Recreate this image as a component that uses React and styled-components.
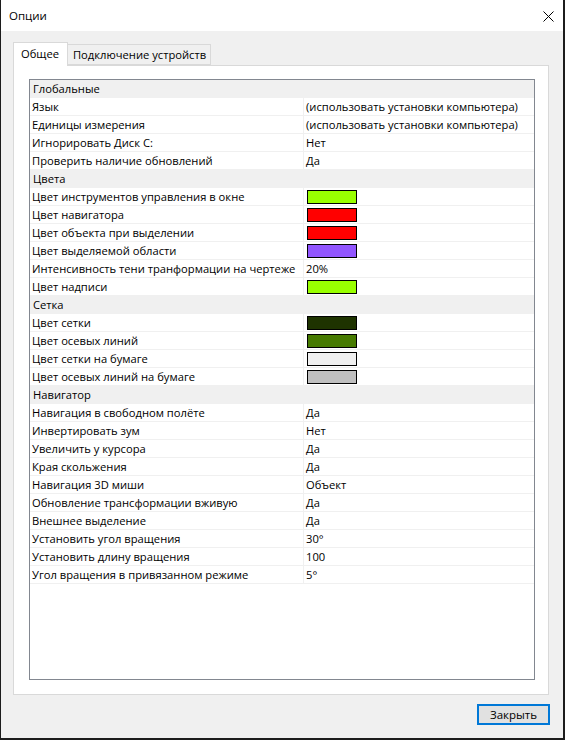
import React from "react";
import styled, { createGlobalStyle } from "styled-components";

const GlobalStyle = createGlobalStyle`
  html, body {
    margin: 0;
    padding: 0;
    background: #1c1c1c;
  }
  body {
    font-family: "Open Sans", "Noto Sans", sans-serif;
    font-size: 11.2px;
    color: #000;
  }
`;

const Window = styled.div`
  width: 562px;
  height: 738px;
  margin-left: 1px;
  display: flex;
  flex-direction: column;
  background: #f0f0f0;
`;

const TitleBar = styled.div`
  height: 31px;
  background: #fff;
  display: flex;
  align-items: center;
  justify-content: space-between;
  padding-left: 8px;
  box-sizing: border-box;
`;

const Title = styled.span`
  font-size: 11.5px;
  line-height: 16px;
  padding-top: 1px;
`;

const CloseButton = styled.div`
  width: 30px;
  height: 31px;
  display: flex;
  align-items: center;
  justify-content: center;
  padding-top: 1px;
  box-sizing: border-box;
`;

const Body = styled.div`
  flex: 1;
  display: flex;
  flex-direction: column;
  padding: 12px 14px 13px 12px;
  min-height: 0;
`;

const TabStrip = styled.div`
  display: flex;
  align-items: flex-end;
  height: 23px;
  position: relative;
  z-index: 1;
  margin-bottom: -1px;
`;

const Tab = styled.div`
  box-sizing: border-box;
  height: ${(p) => (p.$active ? "24px" : "21px")};
  padding: ${(p) => (p.$active ? "3px 8px 0 7px" : "2px 4px 0 5px")};
  background: ${(p) => (p.$active ? "#fff" : "#f0f0f0")};
  border: 1px solid #d9d9d9;
  border-bottom: ${(p) => (p.$active ? "none" : "1px solid #d9d9d9")};
  border-left: ${(p) => (p.$first ? "1px solid #d9d9d9" : "none")};
  margin-bottom: ${(p) => (p.$active ? "0" : "1px")};
  line-height: 16px;
  white-space: nowrap;
`;

const Panel = styled.div`
  flex: 1;
  display: flex;
  flex-direction: column;
  background: #fff;
  border: 1px solid #d9d9d9;
  padding: 13px 13px 14px 15px;
  min-height: 0;
`;

const Grid = styled.div`
  flex: 1;
  border: 1px solid #828790;
  background: #fff;
  overflow: hidden;
`;

const CategoryRow = styled.div`
  height: 17px;
  border-bottom: 1px solid #f0f0f0;
  background: #f0f0f0;
  padding-left: 3px;
  line-height: 17px;
  white-space: nowrap;
`;

const Row = styled.div`
  display: grid;
  grid-template-columns: 274px 1fr;
  height: 17px;
  border-bottom: 1px solid #f0f0f0;
`;

const NameCell = styled.div`
  padding-left: 2px;
  line-height: 17px;
  white-space: nowrap;
  overflow: hidden;
  border-right: 1px solid #f0f0f0;
`;

const ValueCell = styled.div`
  padding-left: 2px;
  line-height: 17px;
  white-space: nowrap;
  display: flex;
  align-items: center;
`;

const Swatch = styled.span`
  display: block;
  box-sizing: border-box;
  width: 50px;
  height: 14px;
  margin-left: 1px;
  border: 1.5px solid #000;
  background: ${(p) => p.$color};
`;

const Footer = styled.div`
  display: flex;
  justify-content: flex-end;
  padding-top: 9px;
`;

const Button = styled.button`
  width: 73px;
  height: 21px;
  box-sizing: border-box;
  border: 2px solid #0078d7;
  background: #e1e1e1;
  font-family: inherit;
  font-size: 11.5px;
  color: #000;
  padding: 0;
  margin-right: -1px;
`;

const sections = [
  {
    title: "Глобальные",
    rows: [
      ["Язык", "(использовать установки компьютера)"],
      ["Единицы измерения", "(использовать установки компьютера)"],
      ["Игнорировать Диск C:", "Нет"],
      ["Проверить наличие обновлений", "Да"],
    ],
  },
  {
    title: "Цвета",
    rows: [
      ["Цвет инструментов управления в окне", { color: "#99ff00" }],
      ["Цвет навигатора", { color: "#ff0000" }],
      ["Цвет объекта при выделении", { color: "#ff0000" }],
      ["Цвет выделяемой области", { color: "#9155ff" }],
      ["Интенсивность тени транформации на чертеже", "20%"],
      ["Цвет надписи", { color: "#99ff00" }],
    ],
  },
  {
    title: "Сетка",
    rows: [
      ["Цвет сетки", { color: "#1e3300" }],
      ["Цвет осевых линий", { color: "#467a00" }],
      ["Цвет сетки на бумаге", { color: "#f0f0f0" }],
      ["Цвет осевых линий на бумаге", { color: "#bfbfbf" }],
    ],
  },
  {
    title: "Навигатор",
    rows: [
      ["Навигация в свободном полёте", "Да"],
      ["Инвертировать зум", "Нет"],
      ["Увеличить у курсора", "Да"],
      ["Края скольжения", "Да"],
      ["Навигация 3D миши", "Объект"],
      ["Обновление трансформации вживую", "Да"],
      ["Внешнее выделение", "Да"],
      ["Установить угол вращения", "30°"],
      ["Установить длину вращения", "100"],
      ["Угол вращения в привязанном режиме", "5°"],
    ],
  },
];

function CloseIcon() {
  return (
    <svg width="11" height="11" viewBox="0 0 11 11">
      <path d="M0.5 0.5 L10.5 10.5 M10.5 0.5 L0.5 10.5" stroke="#000" strokeWidth="1" fill="none" />
    </svg>
  );
}

export default function App() {
  return (
    <>
      <GlobalStyle />
      <Window>
        <TitleBar>
          <Title>Опции</Title>
          <CloseButton>
            <CloseIcon />
          </CloseButton>
        </TitleBar>
        <Body>
          <TabStrip>
            <Tab $active $first>Общее</Tab>
            <Tab>Подключение устройств</Tab>
          </TabStrip>
          <Panel>
            <Grid>
              {sections.map((s) => (
                <React.Fragment key={s.title}>
                  <CategoryRow>{s.title}</CategoryRow>
                  {s.rows.map(([name, value]) => (
                    <Row key={name}>
                      <NameCell>{name}</NameCell>
                      <ValueCell>
                        {typeof value === "string" ? value : <Swatch $color={value.color} />}
                      </ValueCell>
                    </Row>
                  ))}
                </React.Fragment>
              ))}
            </Grid>
          </Panel>
          <Footer>
            <Button>Закрыть</Button>
          </Footer>
        </Body>
      </Window>
    </>
  );
}
